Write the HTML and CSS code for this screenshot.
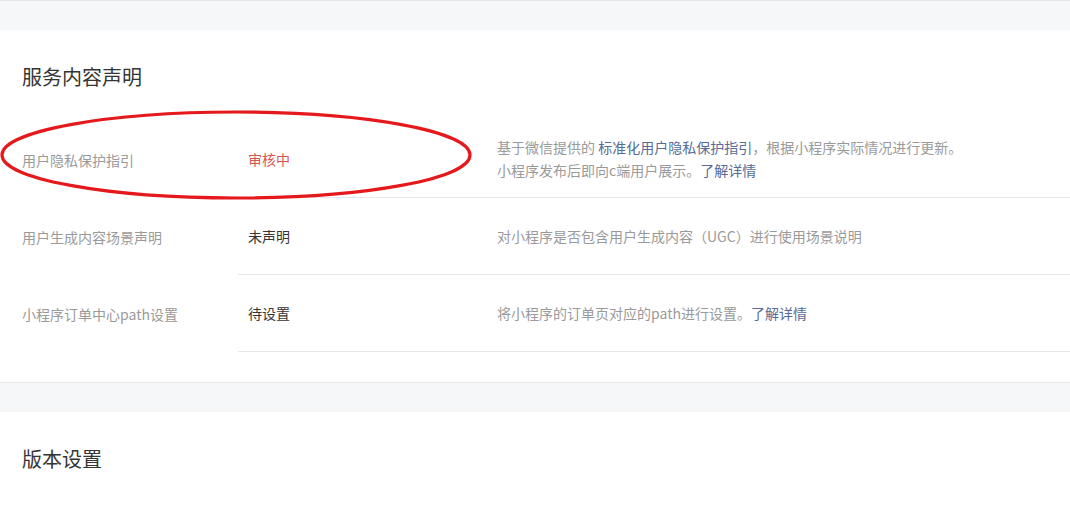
FILE: index.html
```html
<!DOCTYPE html>
<html lang="zh-CN">
<head>
<meta charset="utf-8">
<link rel="stylesheet" href="styles.css">
</head>
<body>
<div class="page">
  <div class="gap"></div>
  <section class="card">
    <h2 class="card-title">服务内容声明</h2>
    <div class="rows">
      <div class="row">
        <div class="label">用户隐私保护指引</div>
        <div class="main">
          <div class="status status-red">审核中</div>
          <div class="desc">基于微信提供的 <a class="link">标准化用户隐私保护指引</a>，根据小程序实际情况进行更新。<br>小程序发布后即向c端用户展示。<a class="link">了解详情</a></div>
        </div>
      </div>
      <div class="row">
        <div class="label">用户生成内容场景声明</div>
        <div class="main">
          <div class="status">未声明</div>
          <div class="desc">对小程序是否包含用户生成内容（UGC）进行使用场景说明</div>
        </div>
      </div>
      <div class="row">
        <div class="label">小程序订单中心path设置</div>
        <div class="main">
          <div class="status">待设置</div>
          <div class="desc">将小程序的订单页对应的path进行设置。<a class="link">了解详情</a></div>
        </div>
      </div>
    </div>
    <svg class="annot" width="480" height="96" viewBox="0 0 480 96" aria-hidden="true">
      <ellipse cx="236" cy="47" rx="234" ry="43" fill="none" stroke="#e5191c" stroke-width="3.2"/>
    </svg>
  </section>
  <div class="gap"></div>
  <section class="card card-last">
    <h2 class="card-title">版本设置</h2>
  </section>
</div>
</body>
</html>
```
FILE: styles.css
```css
* { box-sizing: border-box; }
html, body {
  margin: 0;
  padding: 0;
  background: #f6f7f9;
  font-family: "Noto Sans CJK SC", "Noto Sans", sans-serif;
}
.page {
  border-top: 1px solid #e4e5e7;
}
.gap {
  height: 29px;
  background: #f6f7f9;
}
.card {
  position: relative;
  background: #fff;
  padding: 35px 0 30px;
  border-bottom: 1px solid #e6e6e6;
}
.card-last {
  border-bottom: none;
  min-height: 120px;
}
.card-title {
  margin: 0 0 0 22px;
  font-size: 20px;
  font-weight: 400;
  line-height: 24px;
  color: #353535;
}
.rows {
  margin-top: 32px;
}
.row {
  display: flex;
  height: 77px;
}
.label {
  width: 238px;
  flex: none;
  padding-left: 22px;
  display: flex;
  align-items: center;
  font-size: 14px;
  color: #9a9a9a;
}
.main {
  flex: 1;
  display: flex;
  align-items: center;
  border-bottom: 1px solid #e7e7e7;
  font-size: 14px;
}
.status {
  width: 259px;
  flex: none;
  padding-left: 10px;
  color: #353535;
}
.status-red { color: #d9534f; }
.desc {
  color: #9a9a9a;
  line-height: 23px;
}
.link {
  color: #576b95;
  text-decoration: none;
}
.annot {
  position: absolute;
  left: 0;
  top: 78px;
  overflow: visible;
}
```
